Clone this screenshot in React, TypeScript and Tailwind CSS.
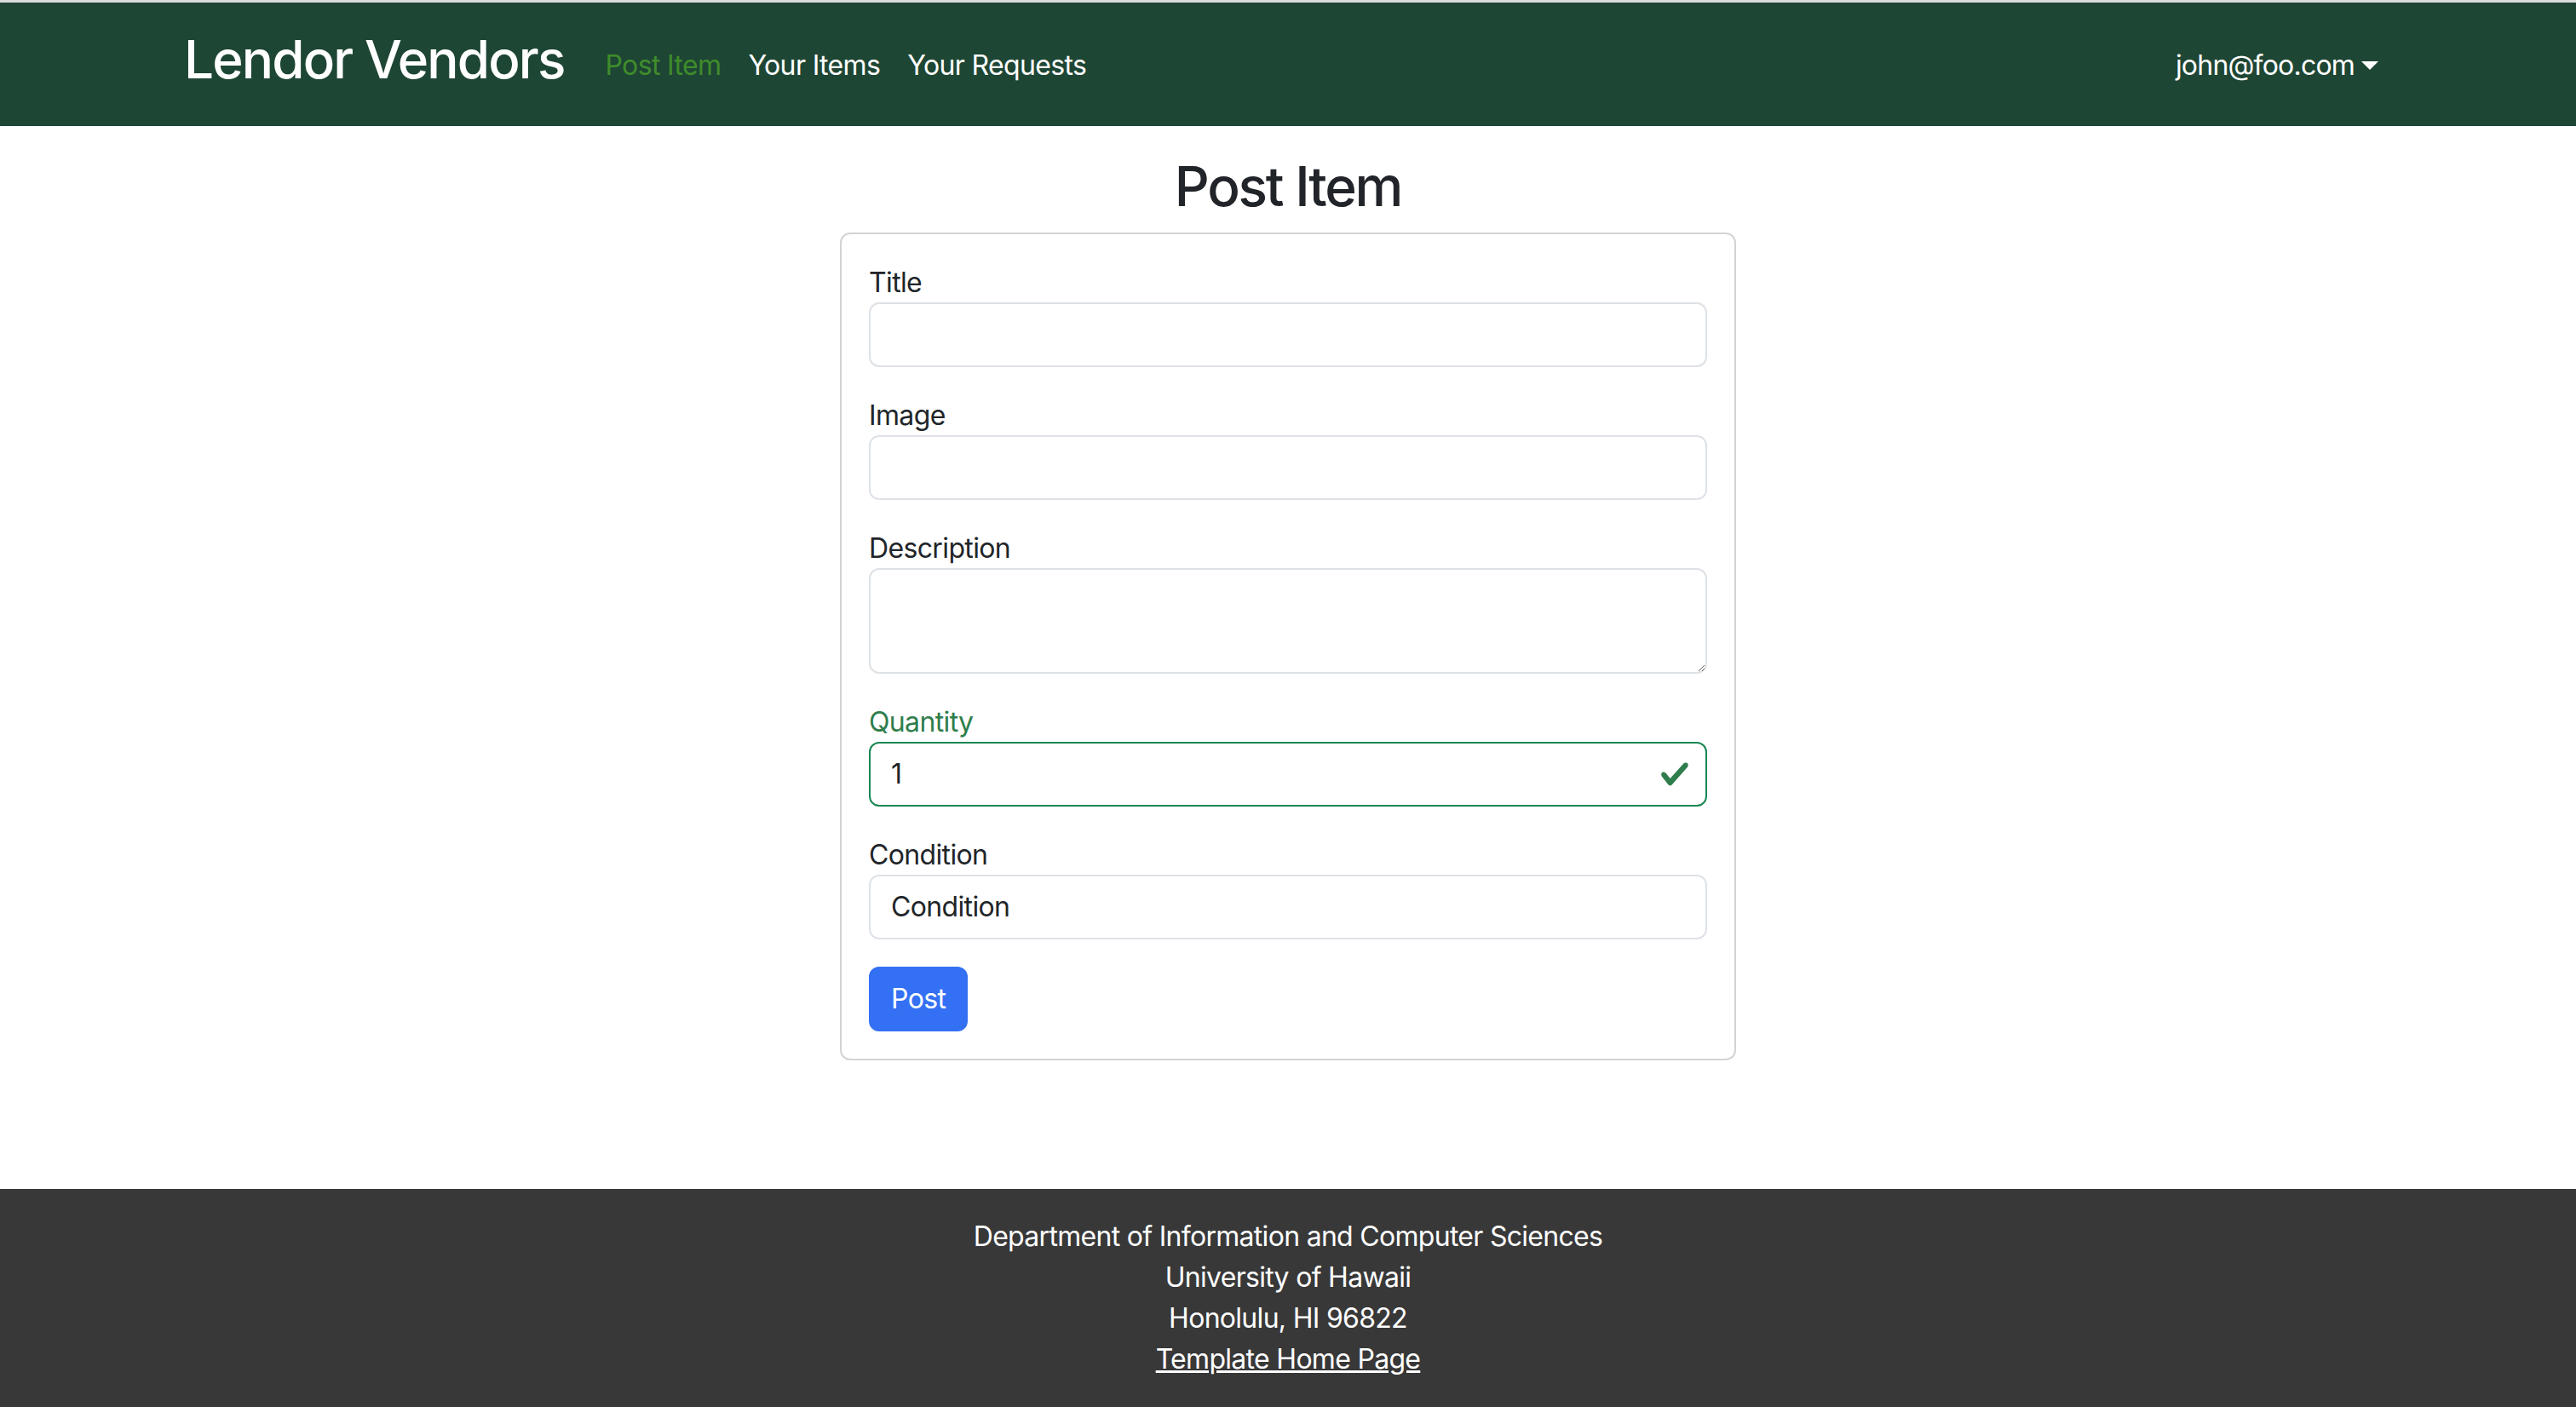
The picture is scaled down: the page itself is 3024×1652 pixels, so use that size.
import React from 'react'

const font = { fontFamily: 'Inter, "Noto Sans", sans-serif' }

const Field = ({ label, children, valid }: { label: string; children: React.ReactNode; valid?: boolean }) => (
    <div className="mb-[32px] flex flex-col">
        <label
            className={`text-[32px] leading-[48px] tracking-[-0.02em] mt-[1px] -mb-[1px] ${valid ? 'text-[#2f7d4c]' : 'text-[#212529]'}`}
        >
            {label}
        </label>
        {children}
    </div>
)

const inputCls =
    'w-full h-[76px] border-2 border-[#dee2e6] rounded-[12px] px-[24px] text-[32px] text-[#212529] bg-white outline-none tracking-[-0.02em]'

const App = () => {
    return (
        <div className="min-h-screen flex flex-col bg-white" style={font}>
            <div className="h-[3px] bg-[#dcdcdc]" />
            <nav className="h-[145px] bg-[#1e4634]">
                <div className="max-w-[2640px] mx-auto h-full px-[24px] flex items-center">
                    <a className="text-[62px] font-medium text-white leading-none mr-[32px] mb-[12px] tracking-[-0.03em]">
                        Lendor Vendors
                    </a>
                    <div className="flex items-center text-[32px] leading-[48px] mt-[2px]">
                        <a className="px-[16px] text-[#3f8c2b] tracking-[-0.02em]">Post Item</a>
                        <a className="px-[16px] text-white tracking-[-0.02em]">Your Items</a>
                        <a className="px-[16px] text-white tracking-[-0.02em]">Your Requests</a>
                    </div>
                    <div className="ml-auto flex items-center px-[16px] text-[32px] leading-[48px] text-white mt-[2px]">
                        <span className="tracking-[-0.025em]">john@foo.com</span>
                        <span className="ml-[8px] w-0 h-0 border-t-[10px] border-t-white border-x-[10px] border-x-transparent" />
                    </div>
                </div>
            </nav>

            <main className="flex-1 pt-[33px] pb-[32px] flex flex-col items-center">
                <h2 className="text-[64px] leading-[1.2] font-medium text-[#212529] mb-[15px] tracking-[-0.035em]">Post Item</h2>
                <div className="w-[1052px] border-2 border-[#d3d3d3] rounded-[12px] p-[32px]">
                    <Field label="Title">
                        <input className={inputCls} />
                    </Field>
                    <Field label="Image">
                        <input className={inputCls} />
                    </Field>
                    <Field label="Description">
                        <textarea className="w-full h-[124px] border-2 border-[#dee2e6] rounded-[12px] px-[24px] py-[12px] text-[32px] bg-white outline-none block" />
                    </Field>
                    <Field label="Quantity" valid>
                        <div className="relative">
                            <input
                                className="w-full h-[76px] border-2 border-[#198754] rounded-[12px] px-[24px] text-[32px] text-[#212529] bg-white outline-none"
                                defaultValue="1"
                            />
                            <svg
                                className="absolute right-[20px] top-1/2 -translate-y-1/2 w-[36px] h-[36px]"
                                viewBox="0 0 8 8"
                            >
                                <path
                                    fill="#2f7d4c"
                                    d="M2.3 6.73.6 4.53c-.4-1.04.46-1.4 1.1-.8l1.1 1.4 3.4-3.8c.6-.63 1.6-.27 1.2.7l-4 4.6c-.43.5-.8.4-1.1.1z"
                                />
                            </svg>
                        </div>
                    </Field>
                    <Field label="Condition">
                        <input className={inputCls} defaultValue="Condition" />
                    </Field>
                    <button className="h-[76px] px-[24px] border-2 border-[#3470f3] bg-[#3470f3] text-white text-[32px] rounded-[12px] tracking-[-0.02em]">
                        Post
                    </button>
                </div>
            </main>

            <footer className="bg-[#383838] py-[32px] text-center text-white text-[32px] leading-[48px]">
                <div className="tracking-[-0.022em]">Department of Information and Computer Sciences</div>
                <div className="tracking-[-0.022em]">University of Hawaii</div>
                <div className="tracking-[-0.022em]">Honolulu, HI 96822</div>
                <a className="underline tracking-[-0.022em]">Template Home Page</a>
            </footer>
        </div>
    )
}

export default App
